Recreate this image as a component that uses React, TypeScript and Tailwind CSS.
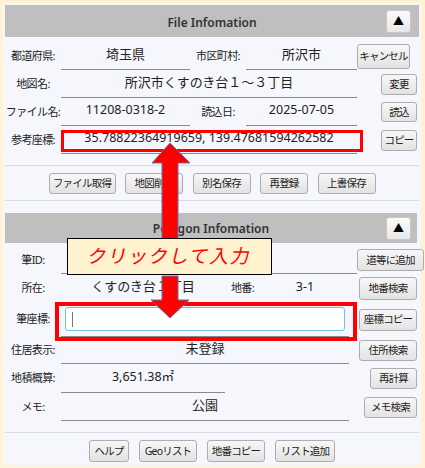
import React from "react";

const FONT = { fontFamily: '"Noto Sans", "Noto Sans CJK JP", sans-serif' };

function Btn({ children, className = "" }: { children: React.ReactNode; className?: string }) {
  return (
    <div
      className={
        "flex items-center justify-center whitespace-nowrap rounded-[3px] border border-[#adadad] bg-gradient-to-b from-[#f7f7f7] to-[#e3e3e3] text-[10.5px] tracking-[-0.8px] text-[#222] leading-none shrink-0 " +
        className
      }
    >
      {children}
    </div>
  );
}

function Label({ children, w = "w-[56px]" }: { children?: React.ReactNode; w?: string }) {
  return (
    <div className={w + " shrink-0 whitespace-nowrap text-center text-[11px] tracking-[-0.6px] text-[#222]"}>
      {children}
    </div>
  );
}

function Val({ children, w, line = true, className = "" }: { children?: React.ReactNode; w: string; line?: boolean; className?: string }) {
  return (
    <div
      className={
        w +
        " shrink-0 h-full flex items-center justify-center whitespace-nowrap pb-[2px] text-[#222] " +
        (line ? "border-b border-[#8a8a8a] " : "") +
        (className || "text-[13px]")
      }
    >
      {children}
    </div>
  );
}

function Toggle({ className = "" }: { className?: string }) {
  return (
    <div
      className={
        "absolute flex h-[23px] w-[25px] items-center justify-center rounded-[3px] border border-[#c8c8c8] bg-gradient-to-b from-[#fbfbfb] to-[#e8e8e8] text-[11px] text-black " +
        className
      }
    >
      ▲
    </div>
  );
}

export default function App() {
  return (
    <div className="relative h-[468px] w-[425px] bg-[#fff3d4] p-[3px]" style={FONT}>
      <div className="flex h-[462px] w-[418px] flex-col bg-[#f5f7fd] p-[2px]">
        {/* Panel 1 */}
        <div className="relative flex h-[32px] items-center justify-center bg-[#bfbfbf] pt-[3px]">
          <span className="text-[12px] font-semibold text-[#333]">File Infomation</span>
          <Toggle className="right-[8px] top-[5px]" />
        </div>
        <div className="mt-[5px] flex h-[28px] items-center">
          <Label>都道府県:</Label>
          <Val w="w-[129px]">埼玉県</Val>
          <Label>市区町村:</Label>
          <Val w="w-[111px]">所沢市</Val>
          <Btn className="h-[25px] w-[53px] border-[#5e5e5e]">キャンセル</Btn>
        </div>
        <div className="flex h-[28px] items-center">
          <Label>地図名:</Label>
          <Val w="w-[296px]">所沢市くすのき台１～３丁目</Val>
          <div className="flex flex-1 justify-end pr-[2px]">
            <Btn className="h-[21px] w-[36px]">変更</Btn>
          </div>
        </div>
        <div className="flex h-[28px] items-center">
          <Label>ファイル名:</Label>
          <Val w="w-[129px]" className="text-[12.5px]">11208-0318-2</Val>
          <Label>読込日:</Label>
          <Val w="w-[111px]" className="text-[12.5px]">2025-07-05</Val>
          <div className="flex flex-1 justify-end pr-[2px]">
            <Btn className="h-[20px] w-[36px]">読込</Btn>
          </div>
        </div>
        <div className="flex h-[28px] items-center">
          <Label>参考座標:</Label>
          <Val w="w-[296px]" className="text-[12.5px]">35.78822364919659, 139.47681594262582</Val>
          <div className="flex flex-1 justify-end pr-[2px]">
            <Btn className="h-[21px] w-[36px]">コピー</Btn>
          </div>
        </div>
        <div className="mt-[11px] border-t border-[#d8dbe2] pt-[7px] pb-[6px]">
          <div className="flex justify-center gap-[9.5px]">
            <Btn className="h-[21px] w-[67px]">ファイル取得</Btn>
            <Btn className="h-[21px] w-[58px]">地図削除</Btn>
            <Btn className="h-[21px] w-[58px]">別名保存</Btn>
            <Btn className="h-[21px] w-[48px]">再登録</Btn>
            <Btn className="h-[21px] w-[58px]">上書保存</Btn>
          </div>
        </div>
        <div className="h-[13px] border-t border-[#d8dbe2]" />

        {/* Panel 2 */}
        <div className="mr-[2px]">
          <div className="relative flex h-[30px] items-center justify-center bg-[#bfbfbf] pt-[2px]">
            <span className="text-[12px] font-semibold text-[#333]">Polygon Infomation</span>
            <Toggle className="right-[6px] top-[4px]" />
          </div>
        </div>
        <div className="mt-[3px] flex h-[28px] items-center">
          <Label>筆ID:</Label>
          <Val w="w-[164px]" />
          <Label w="w-[33px]" />
          <Val w="w-[99px]" />
          <div className="flex flex-1 justify-end pr-[2px]">
            <Btn className="h-[22px] w-[67px]">道等に追加</Btn>
          </div>
        </div>
        <div className="flex h-[28px] items-center">
          <Label>所在:</Label>
          <Val w="w-[164px]" line={false}>くすのき台１丁目</Val>
          <Label w="w-[35px]">地番:</Label>
          <Val w="w-[90px]" line={false} className="text-[12.5px]">3-1</Val>
          <div className="flex flex-1 justify-end pr-[2px]">
            <Btn className="h-[23px] w-[58px]">地番検索</Btn>
          </div>
        </div>
        <div className="flex h-[35px] items-center">
          <Label>筆座標:</Label>
          <div className="flex h-full w-[288px] shrink-0 items-center border-b border-[#8a8a8a] pl-[4px]">
            <div className="flex h-[24px] w-[280px] items-center rounded-[3px] border-[1.5px] border-[#6ec0ea] bg-white pl-[6px]">
              <div className="h-[15px] w-[1px] bg-[#777]" />
            </div>
          </div>
          <div className="flex flex-1 justify-end pr-[2px]">
            <Btn className="h-[22px] w-[58px]">座標コピー</Btn>
          </div>
        </div>
        <div className="flex h-[27px] items-center">
          <Label>住居表示:</Label>
          <Val w="w-[288px]">未登録</Val>
          <div className="flex flex-1 justify-end pr-[2px]">
            <Btn className="h-[21px] w-[58px]">住所検索</Btn>
          </div>
        </div>
        <div className="flex h-[29px] items-center">
          <Label>地積概算:</Label>
          <Val w="w-[164px]" className="text-[12.5px]">3,651.38㎡</Val>
          <div className="flex flex-1 justify-end pr-[2px]">
            <Btn className="h-[21px] w-[47px]">再計算</Btn>
          </div>
        </div>
        <div className="flex h-[28px] items-center">
          <Label>メモ:</Label>
          <Val w="w-[288px]">公園</Val>
          <div className="flex flex-1 justify-end pr-[2px]">
            <Btn className="h-[21px] w-[53px]">メモ検索</Btn>
          </div>
        </div>
        <div className="mt-[11px] border-t border-[#d8dbe2] pt-[7px]">
          <div className="flex justify-center gap-[10px]">
            <Btn className="h-[22px] w-[40px]">ヘルプ</Btn>
            <Btn className="h-[22px] w-[58px]">Geoリスト</Btn>
            <Btn className="h-[22px] w-[58px]">地番コピー</Btn>
            <Btn className="h-[22px] w-[60px]">リスト追加</Btn>
          </div>
        </div>
      </div>

      {/* Annotations */}
      <div className="absolute left-[61px] top-[130px] h-[22px] w-[302px] border-[3px] border-[#ff0000]" />
      <div className="absolute left-[55px] top-[302px] h-[39px] w-[302px] border-4 border-[#ff0000]" />
      <svg className="absolute left-0 top-0" width="425" height="468" viewBox="0 0 425 468">
        <polygon
          points="170,143 190,163 178,163 178,240 162,240 162,163 152,163"
          fill="#ff0000"
          stroke="#5d76a8"
          strokeWidth="1"
        />
        <polygon
          points="162,276 178,276 178,300 189,300 170,318 151,300 162,300"
          fill="#ff0000"
          stroke="#5d76a8"
          strokeWidth="1"
        />
      </svg>
      <div className="absolute left-[67px] top-[238px] flex h-[37px] w-[205px] items-center justify-center border border-black bg-[#fff3cf]">
        <span className="inline-block -skew-x-12 text-[19px] tracking-[1.5px] text-[#ff0000]">クリックして入力</span>
      </div>
    </div>
  );
}
